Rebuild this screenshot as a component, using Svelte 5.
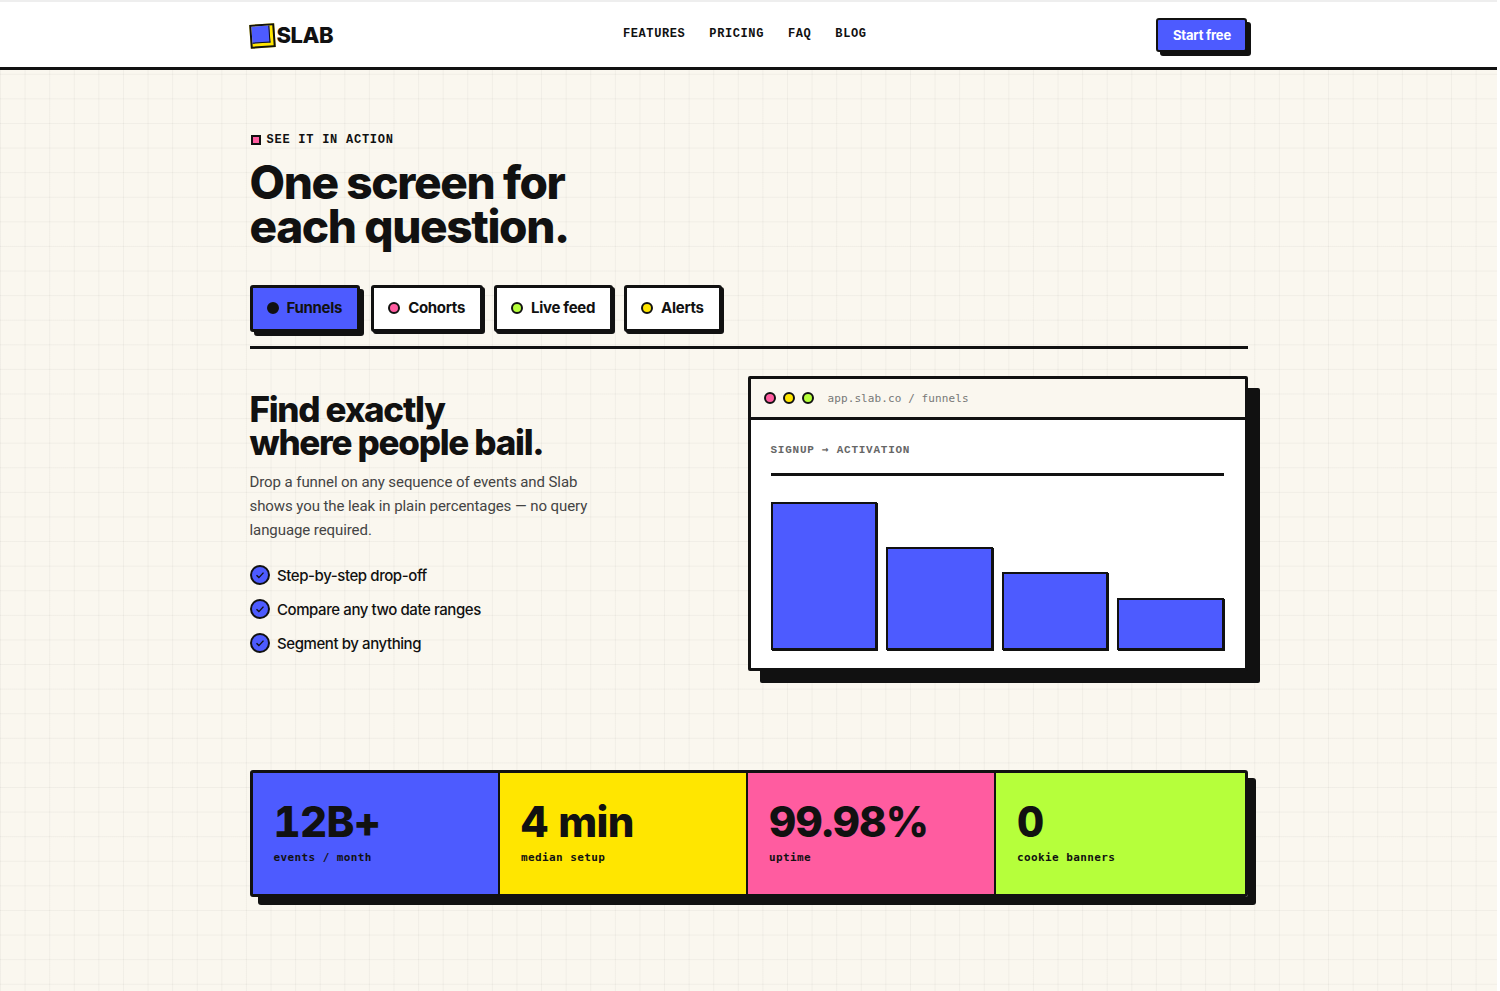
<script>
	const links = ['FEATURES', 'PRICING', 'FAQ', 'BLOG'];
	const tabs = [
		{ label: 'Funnels', color: '#111111' },
		{ label: 'Cohorts', color: '#ff5ca0' },
		{ label: 'Live feed', color: '#b6ff3b' },
		{ label: 'Alerts', color: '#ffe600' }
	];
	const checks = ['Step-by-step drop-off', 'Compare any two date ranges', 'Segment by anything'];
	const bars = [148, 103, 78, 52];
	const stats = [
		{ value: '12B+', label: 'events / month', color: '#4d5bff' },
		{ value: '4 min', label: 'median setup', color: '#ffe600' },
		{ value: '99.98%', label: 'uptime', color: '#ff5ca0' },
		{ value: '0', label: 'cookie banners', color: '#b6ff3b' }
	];
	let active = $state('Funnels');
</script>

<div class="page">
	<header class="nav">
		<div class="nav-inner">
			<div class="logo">
				<span class="logo-mark"><span class="logo-face"></span></span>
				<span>SLAB</span>
			</div>
			<nav class="links">
				{#each links as link}
					<span>{link}</span>
				{/each}
			</nav>
			<button class="cta">Start free</button>
		</div>
	</header>

	<main class="wrap">
		<div class="eyebrow"><span class="eyebrow-box"></span>SEE IT IN ACTION</div>
		<h1>One screen for<br />each question.</h1>

		<div class="tabs">
			{#each tabs as tab}
				<button class="tab" class:active={active === tab.label} onclick={() => (active = tab.label)}>
					<span class="dot" style="background: {tab.color}"></span>
					{tab.label}
				</button>
			{/each}
		</div>

		<section class="panel">
			<div class="copy">
				<h2>Find exactly<br />where people bail.</h2>
				<p>Drop a funnel on any sequence of events and Slab shows you the leak in plain percentages — no query language required.</p>
				<ul>
					{#each checks as item}
						<li>
							<svg viewBox="0 0 20 20" width="20" height="20">
								<circle cx="10" cy="10" r="9" fill="#4d5bff" stroke="#111" stroke-width="2" />
								<path d="M6.5 10.2l2.4 2.4 4.6-5" fill="none" stroke="#111" stroke-width="1.4" />
							</svg>
							{item}
						</li>
					{/each}
				</ul>
			</div>

			<div class="window">
				<div class="titlebar">
					<span class="light" style="background: #ff5ca0"></span>
					<span class="light" style="background: #ffe600"></span>
					<span class="light" style="background: #b6ff3b"></span>
					<span class="url">app.slab.co / funnels</span>
				</div>
				<div class="window-body">
					<div class="chart-title">SIGNUP <span class="arrow">→</span> ACTIVATION</div>
					<div class="chart">
						{#each bars as h}
							<div class="bar" style="height: {h}px"></div>
						{/each}
					</div>
				</div>
			</div>
		</section>

		<section class="stats">
			{#each stats as stat}
				<div class="stat" style="background: {stat.color}">
					<div class="stat-value">{stat.value}</div>
					<div class="stat-label">{stat.label}</div>
				</div>
			{/each}
		</section>
	</main>
</div>

<style>
	:global(body) { background: #fff; }
	.page {
		box-sizing: border-box;
		height: 991px;
		overflow: hidden;
		border-top: 2px solid #eeeeee;
		margin-right: 3px;
		background-color: #faf7ef;
		background-image:
			linear-gradient(rgba(17, 17, 17, 0.04) 1px, transparent 1px),
			linear-gradient(90deg, rgba(17, 17, 17, 0.04) 1px, transparent 1px);
		background-size: 24.6px 24.6px;
		background-position: 0 -2px;
		font-family: Inter, "Liberation Sans", sans-serif;
		color: #111;
	}
	.nav { background: #fff; border-bottom: 3px solid #111; }
	.nav-inner {
		width: 998px; height: 65px; margin: 0 auto;
		display: flex; align-items: center; justify-content: space-between;
	}
	.logo {
		display: flex; align-items: center; gap: 2px;
		font-size: 22px; font-weight: 800; letter-spacing: -0.5px;
	}
	.logo-mark {
		box-sizing: border-box;
		width: 25px; height: 24px;
		margin-top: 3px;
		background: #ffe600; border: 2px solid #111;
		transform: rotate(-4deg);
	}
	.logo-face {
		display: block;
		width: 17px; height: 16px;
		background: #4d5bff;
		border-right: 1px solid #111; border-bottom: 1px solid #111;
	}
	.links {
		display: flex; gap: 24px; margin-bottom: 2px;
		font-family: "Liberation Mono", monospace;
		font-size: 12px; font-weight: 700; letter-spacing: 0.6px;
	}
	.cta {
		width: 91px; height: 34px; padding: 0;
		background: #4d5bff; color: #fff;
		border: 2px solid #111; border-radius: 3px;
		box-shadow: 4px 4px 0 #111;
		font-family: inherit; font-size: 13px; font-weight: 700; letter-spacing: -0.2px;
	}
	.wrap { width: 998px; margin: 0 auto; }
	.eyebrow {
		display: flex; align-items: center; gap: 6px;
		margin-top: 63px;
		font-family: "Liberation Mono", monospace;
		font-size: 12px; font-weight: 700; letter-spacing: 0.75px;
		line-height: 14px;
	}
	.eyebrow-box {
		width: 6px; height: 6px; margin-left: 1px;
		background: #ff5ca0; border: 2px solid #111;
	}
	h1 {
		margin: 13px 0 0;
		font-size: 46px; font-weight: 800; line-height: 44px; letter-spacing: -1.4px;
	}
	.tabs {
		display: flex; gap: 11px;
		margin-top: 37px; padding-bottom: 14px;
		border-bottom: 3px solid #111;
	}
	.tab {
		display: flex; align-items: center; gap: 8px;
		height: 47px; padding: 0 15px 2px 14px;
		background: #fff; color: #111;
		border: 3px solid #111; border-radius: 3px;
		box-shadow: 2px 2px 0 #111;
		font-family: inherit; font-size: 15px; font-weight: 700; letter-spacing: -0.3px;
		white-space: nowrap;
	}
	.tab.active { background: #4d5bff; box-shadow: 4px 4px 0 #111; }
	.dot {
		width: 8px; height: 8px;
		border: 2px solid #111; border-radius: 50%;
	}
	.panel {
		display: flex; justify-content: space-between; align-items: flex-start;
		margin-top: 27px;
	}
	.copy { width: 345px; padding-top: 17px; }
	h2 {
		margin: 0;
		font-size: 35px; font-weight: 800; line-height: 33px; letter-spacing: -1.3px;
	}
	p {
		margin: 11px 0 0;
		font-family: Roboto, Inter, sans-serif;
		font-size: 15px; line-height: 24px; color: #444; letter-spacing: -0.08px;
	}
	ul { list-style: none; margin: 23px 0 0; padding: 0; display: flex; flex-direction: column; gap: 14px; }
	li {
		display: flex; align-items: center; gap: 7.5px;
		height: 20px;
		font-size: 15px; font-weight: 500; letter-spacing: -0.42px;
	}
	.window {
		box-sizing: border-box;
		width: 500px; height: 295px;
		background: #fff;
		border: 3px solid #111; border-radius: 2px;
		box-shadow: 12px 12px 0 #111;
	}
	.titlebar {
		display: flex; align-items: center; gap: 7px;
		height: 38px; padding: 0 13px;
		background: #faf7ef;
		border-bottom: 3px solid #111;
	}
	.light {
		width: 8px; height: 8px;
		border: 2px solid #111; border-radius: 50%;
	}
	.url {
		margin-left: 7px;
		font-family: "DejaVu Sans Mono", monospace;
		font-size: 11px; color: #777; letter-spacing: 0.1px;
	}
	.window-body { padding: 23px 21px 0 20px; }
	.chart-title {
		font-family: "Liberation Mono", monospace;
		font-size: 11px; font-weight: 700; color: #666; letter-spacing: 0.75px;
		line-height: 14px;
		padding-bottom: 16px;
		border-bottom: 3px solid #111;
	}
	.arrow { font-family: "DejaVu Sans Mono", monospace; }
	.chart {
		display: flex; align-items: flex-end; gap: 9px;
		height: 148px; margin-top: 26px;
	}
	.bar {
		flex: 1;
		box-sizing: border-box;
		background: #4d5bff;
		border: 2px solid #111;
		box-shadow: 1px 1px 0 #111;
	}
	.stats {
		display: grid;
		grid-template-columns: 247.5px 248px 248px 1fr;
		box-sizing: border-box;
		height: 127px; margin-top: 99px;
		border: 3px solid #111; border-radius: 3px;
		box-shadow: 8px 8px 0 #111;
	}
	.stat {
		padding: 26px 21px 0;
		border-right: 2px solid #111;
	}
	.stat:last-child { border-right: none; }
	.stat-value {
		font-size: 42px; font-weight: 800; line-height: 46px;
		font-variant-numeric: tabular-nums; letter-spacing: -0.6px;
	}
	.stat-label {
		margin-top: 6px;
		font-family: "DejaVu Sans Mono", monospace;
		font-size: 11px; font-weight: 700; letter-spacing: 0.4px;
	}
</style>
